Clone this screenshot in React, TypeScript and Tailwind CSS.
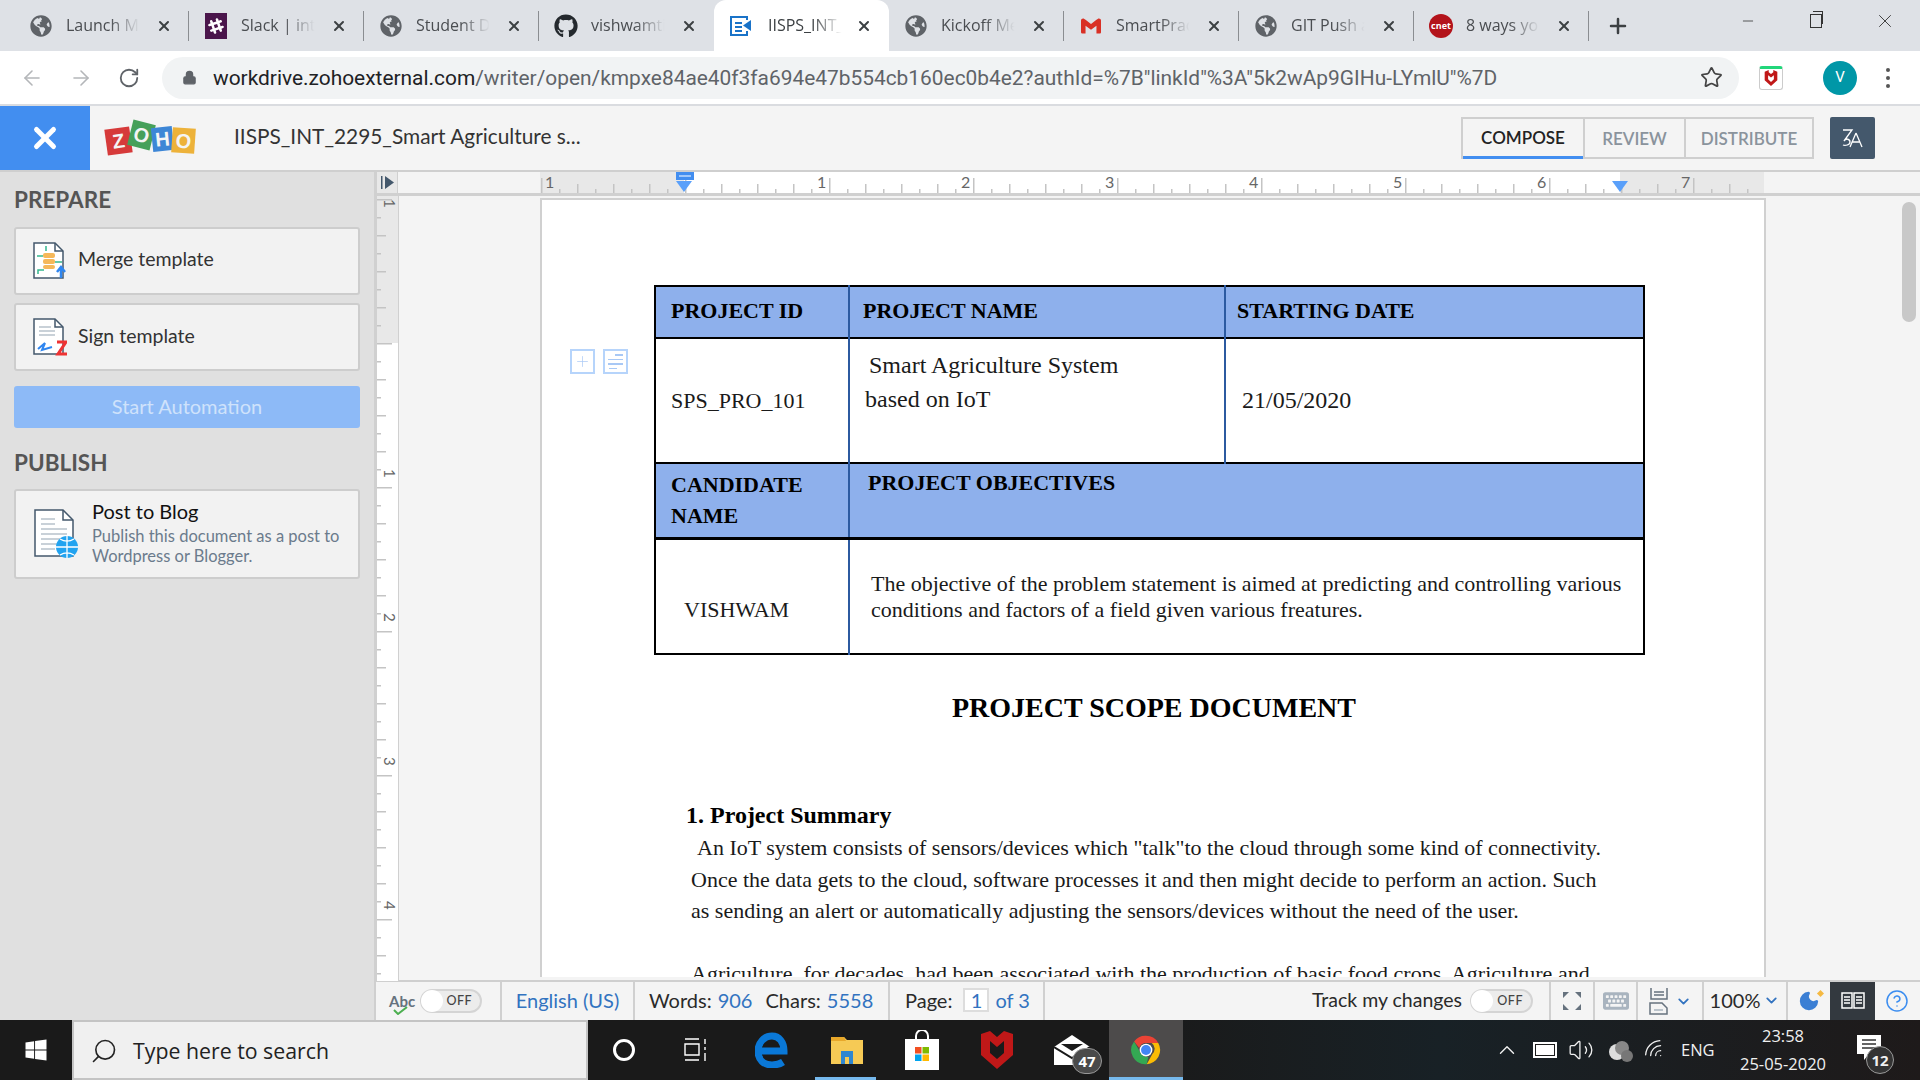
import { ArrowLeft, ArrowRight, RotateCw, Lock, Star, Plus, X, Minus, ChevronDown, ChevronUp, Search, Volume2, Wifi, CircleHelp, Moon } from "lucide-react";
import { FaGithub, FaGlobeAmericas, FaSlackHash, FaWindows, FaKeyboard } from "react-icons/fa";
import { SiGmail } from "react-icons/si";

function Globe() {
  return <FaGlobeAmericas size={22} className="text-[#5f6368]" />;
}

function DocTabIcon() {
  return (
    <svg width="24" height="22" viewBox="0 0 24 22" fill="none" stroke="#1a73c8" strokeWidth="2">
      <path d="M18 5V2H2v18h16v-4" />
      <path d="M6 8h7M6 12h7M6 16h7" />
      <path d="M22 5v11l-8-5.5z" fill="#1a73c8" stroke="none" />
    </svg>
  );
}

const tabs = [
  { title: "Launch Me", icon: <Globe /> },
  { title: "Slack | inte", icon: <span className="w-[22px] h-[26px] bg-[#4a154b] flex items-center justify-center"><FaSlackHash size={18} className="text-white" /></span> },
  { title: "Student D", icon: <Globe /> },
  { title: "vishwamti", icon: <FaGithub size={24} className="text-[#24292e]" /> },
  { title: "IISPS_INT_", icon: <DocTabIcon />, active: true },
  { title: "Kickoff Me", icon: <Globe /> },
  { title: "SmartPrac", icon: <SiGmail size={20} className="text-[#d93025]" /> },
  { title: "GIT Push a", icon: <Globe /> },
  { title: "8 ways yo", icon: <span className="w-[24px] h-[24px] rounded-full bg-[#b3131b] text-white text-[9px] font-bold flex items-center justify-center">cnet</span> },
];

function Tab({ title, icon, active, last }: { title: string; icon: React.ReactNode; active?: boolean; last?: boolean }) {
  return (
    <div
      className={`relative h-full w-[175px] shrink-0 flex items-center pl-[15px] pr-[17px] ${
        active ? "bg-white rounded-t-[12px]" : ""
      }`}
    >
      <div className="w-[24px] flex justify-center shrink-0">{icon}</div>
      <div
        className={`${active ? "ml-[15px] text-[#3c4043]" : "ml-[13px] text-[#4a4d51]"} w-[80px] whitespace-nowrap text-[16px] mb-[2px] [mask-image:linear-gradient(to_right,black_55%,transparent_92%)]`}
      >
        {title}
      </div>
      <X size={16} strokeWidth={3} className="ml-auto text-[#3c4043]" />
      {!active && !last && <div className="absolute right-0 top-[11px] h-[30px] w-[1px] bg-[#8a8d91]" />}
    </div>
  );
}

function ChromeBar() {
  return (
    <div className="h-[51px] bg-[#dee1e6] flex items-end font-['Open_Sans',sans-serif]">
      <div className="w-[14px]" />
      {tabs.map((t, i) => (
        <Tab key={t.title} title={t.title} icon={t.icon} active={t.active} last={i === 3} />
      ))}
      <Plus size={24} strokeWidth={2.5} className="ml-[17px] mb-[13px] text-[#3c4043]" />
      <div className="ml-auto flex items-center h-full text-[#333]">
        <div className="w-[68px] flex justify-center mb-[10px]"><Minus size={16} strokeWidth={1.2} /></div>
        <div className="w-[68px] flex justify-center mb-[10px] relative">
          <span className="w-[12px] h-[14px] border border-[#333] bg-[#dee1e6] block" />
          <span className="absolute top-[-3px] left-[31px] w-[10px] h-[13px] border-t border-r border-[#333] block" />
        </div>
        <div className="w-[70px] flex justify-center mb-[10px]"><X size={22} strokeWidth={1} /></div>
      </div>
    </div>
  );
}

function AddressBar() {
  return (
    <div className="h-[55px] bg-white border-b-2 border-[#dadce0] flex items-center font-['Roboto',sans-serif]">
      <div className="w-[162px] pl-[20px] flex items-center gap-[25px] shrink-0">
        <ArrowLeft size={24} strokeWidth={1.6} className="text-[#b4b6b9]" />
        <ArrowRight size={24} strokeWidth={1.6} className="text-[#b4b6b9]" />
        <RotateCw size={22} strokeWidth={2} className="text-[#5f6368]" />
      </div>
      <div className="w-[1577px] h-[42px] rounded-full bg-[#f1f3f4] flex items-center pl-[20px]">
        <Lock size={15} fill="#5f6368" className="text-[#5f6368]" />
        <div className="ml-[16px] mt-[2px] text-[20.9px] whitespace-nowrap text-[#5f6368]">
          <span className="text-[#202124]">workdrive.zohoexternal.com</span>
          /writer/open/kmpxe84ae40f3fa694e47b554cb160ec0b4e2?authId=%7B"linkId"%3A"5k2wAp9GIHu-LYmlU"%7D
        </div>
        <Star size={23} strokeWidth={1.8} className="ml-auto mr-[16px] text-[#444]" />
      </div>
      <div className="ml-[20px] w-[24px] h-[24px] rounded-[3px] border border-[#ccc] border-t-[3px] border-t-[#22d67a] flex items-center justify-center">
        <McAfee size={14} />
      </div>
      <div className="ml-[40px] w-[34px] h-[34px] rounded-full bg-[#0097a7] text-white text-[15px] flex items-center justify-center">V</div>
      <div className="ml-[29px] flex flex-col gap-[4px]">
        <span className="w-[4px] h-[4px] rounded-full bg-[#555]" />
        <span className="w-[4px] h-[4px] rounded-full bg-[#555]" />
        <span className="w-[4px] h-[4px] rounded-full bg-[#555]" />
      </div>
    </div>
  );
}

function McAfee({ size }: { size: number }) {
  return (
    <svg width={size} height={size * 1.15} viewBox="0 0 24 28">
      <path d="M1 3l7-3v4l4 3 4-3V0l7 3v15l-11 10L1 18z" fill="#c01818" />
      <path d="M7 9l5 4 5-4v7l-5 5-5-5z" fill="#fff" />
    </svg>
  );
}

function ZohoLogo() {
  const letters = [
    { c: "Z", bg: "bg-[#d63a3a]", cls: "-rotate-[8deg] mt-[7px] w-[25px] h-[26px]" },
    { c: "O", bg: "bg-[#46a05a]", cls: "rotate-[14deg] mt-[1px] w-[23px] h-[26px]" },
    { c: "H", bg: "bg-[#3d86d6]", cls: "-rotate-[6deg] mt-[6px] w-[21px] h-[24px]" },
    { c: "O", bg: "bg-[#edb23a]", cls: "rotate-[4deg] mt-[7px] w-[23px] h-[25px]" },
  ];
  return (
    <div className="flex items-start w-[90px] h-[34px] -space-x-[1px]">
      {letters.map((l, i) => (
        <div key={i} className={`${l.bg} ${l.cls} text-[#f4f4f4] font-bold text-[20px] flex items-center justify-center font-['Liberation_Sans',sans-serif]`}>
          {l.c}
        </div>
      ))}
    </div>
  );
}

function AppToolbar() {
  return (
    <div className="h-[66px] bg-[#f4f4f4] border-b-2 border-[#cfcfcf] flex items-center font-['Lato',sans-serif]">
      <div className="w-[90px] h-full bg-[#428ef0] flex items-center justify-center">
        <X size={34} strokeWidth={3.5} className="text-white" />
      </div>
      <div className="ml-[16px]"><ZohoLogo /></div>
      <div className="ml-[38px] mb-[4px] text-[20.85px] text-[#333]">IISPS_INT_2295_Smart Agriculture s...</div>
      <div className="ml-auto flex items-center mr-[45px]">
        <div className="flex h-[42px] border-2 border-b-0 border-[#cfcfcf] text-[17px] font-semibold">
          <div className="w-[120px] pt-[1px] border-b-[3px] border-[#428ef0] flex items-center justify-center text-[#222]">COMPOSE</div>
          <div className="w-[101px] pt-[1px] border-l-2 border-b-2 border-[#cfcfcf] flex items-center justify-center text-[#8a939c]">REVIEW</div>
          <div className="w-[128px] pt-[1px] border-l-2 border-b-2 border-[#cfcfcf] flex items-center justify-center text-[#8a939c]">DISTRIBUTE</div>
        </div>
        <div className="ml-[16px] w-[45px] h-[42px] rounded-[2px] bg-[#44586c] flex items-center justify-center text-white">
          <svg width="24" height="22" viewBox="0 0 24 22" fill="none" stroke="#fff" strokeWidth="1.3">
            <path d="M2 3h9L3 14c2-3 6-2 6 1 0 3-5 4-7 3M15 6l-6 14M15 6l6 14M11 15h8" />
          </svg>
        </div>
      </div>
    </div>
  );
}

function MergeIcon() {
  return (
    <svg width="34" height="38" viewBox="0 0 34 38" fill="none">
      <path d="M1 1h21l8 8v27H1z" fill="#fff" stroke="#44586c" strokeWidth="1.5" />
      <path d="M22 1v8h8" stroke="#44586c" strokeWidth="1.5" />
      <rect x="10" y="11" width="12" height="5" rx="2" fill="#f5b85a" />
      <rect x="10" y="17" width="12" height="5" rx="2" fill="#f5b85a" />
      <rect x="10" y="23" width="12" height="4" rx="2" fill="#f5b85a" />
      <path d="M4 14h6M13 4v5M5 32v-4h6M22 20h7" stroke="#35b88f" strokeWidth="1.5" />
      <path d="M28 36v-9M24 30l4-5 4 5" stroke="#2f86f0" strokeWidth="2.5" />
    </svg>
  );
}

function SignIcon() {
  return (
    <svg width="34" height="38" viewBox="0 0 34 38" fill="none">
      <path d="M1 1h21l8 8v27H1z" fill="#fff" stroke="#44586c" strokeWidth="1.5" />
      <path d="M22 1v8h8" stroke="#44586c" strokeWidth="1.5" />
      <path d="M6 9h12M6 13h16M6 17h16" stroke="#b8c2cc" strokeWidth="1.5" />
      <path d="M5 31l7-6-3 7 10-3" stroke="#2f86f0" strokeWidth="2" />
      <path d="M24 24h9l-8 12h9" stroke="#ee3333" strokeWidth="3" />
    </svg>
  );
}

function BlogIcon() {
  return (
    <svg width="44" height="50" viewBox="0 0 44 50" fill="none">
      <path d="M1 1h28l10 10v36H1z" fill="#fff" stroke="#44586c" strokeWidth="1.5" />
      <path d="M29 1v10h10" stroke="#44586c" strokeWidth="1.5" />
      <path d="M7 10h14M7 15h14M7 20h26M7 25h26M7 30h20M7 35h16M7 40h14" stroke="#b8c2cc" strokeWidth="1.5" />
      <circle cx="33" cy="38" r="11" fill="#22a3f0" />
      <path d="M22 38h22M33 27v22M26 30c5 3 9 3 14 0M26 46c5-3 9-3 14 0" stroke="#fff" strokeWidth="1.3" />
    </svg>
  );
}

function Sidebar() {
  return (
    <aside className="w-[374px] shrink-0 bg-[#e0e0e0] px-[14px] pt-[14px] font-['Lato',sans-serif]">
      <h2 className="text-[22.5px] font-bold text-[#555] leading-[28px]">PREPARE</h2>
      <div className="mt-[13px] h-[68px] w-[346px] bg-[#f2f2f2] border-2 border-[#cdcdcd] rounded-[3px] flex items-center pl-[17px]">
        <MergeIcon />
        <span className="ml-[11px] mb-[5px] text-[19.5px] text-[#333]">Merge template</span>
      </div>
      <div className="mt-[8px] h-[68px] w-[346px] bg-[#f2f2f2] border-2 border-[#cdcdcd] rounded-[3px] flex items-center pl-[17px]">
        <SignIcon />
        <span className="ml-[11px] mb-[3px] text-[19.5px] text-[#333]">Sign template</span>
      </div>
      <div className="mt-[15px] h-[42px] w-[346px] pb-[2px] bg-[#8dbaf7] rounded-[3px] flex items-center justify-center text-[20px] text-[#cfe2fb]">Start Automation</div>
      <h2 className="mt-[21px] text-[22.5px] font-bold text-[#555] leading-[28px]">PUBLISH</h2>
      <div className="mt-[12px] h-[90px] w-[346px] bg-[#f2f2f2] border-2 border-[#cdcdcd] rounded-[3px] flex pl-[18px]">
        <div className="pt-[18px]"><BlogIcon /></div>
        <div className="ml-[14px] pt-[7px]">
          <div className="text-[20px] leading-[26px] text-[#111]">Post to Blog</div>
          <div className="mt-[2px] text-[16.5px] leading-[20px] text-[#6b7b8c]">Publish this document as a post to<br />Wordpress or Blogger.</div>
        </div>
      </div>
    </aside>
  );
}

function HorizontalRuler() {
  const ticks = Array.from({ length: 68 }, (_, i) => i);
  const labels = [1, 2, 3, 4, 5, 6, 7];
  return (
    <svg width="1224" height="21" className="block">
      <rect width="1224" height="21" fill="#e8e8e8" />
      <rect x="144" width="936" height="21" fill="#fff" />
      {ticks.map((n) => {
        const h = n % 8 === 0 ? 15 : n % 2 === 0 ? 9 : 4;
        return <rect key={n} x={1 + n * 18} y={21 - h} width="1.5" height={h} fill="#c4c4c4" />;
      })}
      <text x="5" y="16" fontSize="16" fill="#666" fontFamily="Lato">1</text>
      {labels.map((l) => (
        <text key={l} x={144 * l + 133} y="16" fontSize="16" fill="#666" fontFamily="Lato">{l}</text>
      ))}
    </svg>
  );
}

function VerticalRuler() {
  const ticks = Array.from({ length: 46 }, (_, i) => i);
  const labelY = [3, 273, 417, 561, 705];
  return (
    <svg width="21" height="785" className="block">
      <rect width="21" height="785" fill="#fff" />
      <rect width="21" height="147" fill="#e8e8e8" />
      {ticks.map((n) => {
        const w = n % 8 === 0 ? 15 : n % 2 === 0 ? 9 : 4;
        return <rect key={n} x="0" y={3 + n * 18} width={w} height="1.5" fill="#c4c4c4" />;
      })}
      {labelY.map((y, i) => (
        <text key={y} x="0" y="0" fontSize="15" fill="#666" fontFamily="Lato" transform={`translate(7 ${y}) rotate(90)`}>{i === 0 ? 1 : i}</text>
      ))}
    </svg>
  );
}

function ProjectTable() {
  const div = "border-l-2 border-l-[#2c5aa0]";
  const head = "bg-[#8eb0ec] font-bold text-black";
  return (
    <table className="table-fixed w-[989px] border-2 border-black text-[22px] text-[#1a1a1a] leading-[31px]">
      <colgroup>
        <col className="w-[194px]" />
        <col className="w-[376px]" />
        <col className="w-[419px]" />
      </colgroup>
      <tbody>
        <tr className={`h-[52px] ${head} border-b-2 border-black`}>
          <td className="pl-[15px] pb-[3px]">PROJECT ID</td>
          <td className={`pl-[13px] pb-[3px] ${div}`}>PROJECT NAME</td>
          <td className={`pl-[11px] pb-[3px] ${div}`}>STARTING DATE</td>
        </tr>
        <tr className="h-[125px] border-b-2 border-black">
          <td className="pl-[15px]">SPS_PRO_101</td>
          <td className={`pl-[15px] align-top pt-[10px] text-[24px] leading-[33.5px] ${div}`}>
            <span className="ml-[4px]">Smart Agriculture System</span>
            <br />
            based on IoT
          </td>
          <td className={`pl-[16px] text-[24px] ${div}`}>21/05/2020</td>
        </tr>
        <tr className={`h-[75px] ${head} border-b-[3px] border-black`}>
          <td className="pl-[15px] pb-[1px]">CANDIDATE<br />NAME</td>
          <td colSpan={2} className={`pl-[18px] align-top pt-[3px] ${div}`}>PROJECT OBJECTIVES</td>
        </tr>
        <tr className="h-[116px]">
          <td className="pl-[28px] pt-[26px]">VISHWAM</td>
          <td colSpan={2} className={`pl-[21px] pt-[1px] leading-[26px] ${div}`}>
            The objective of the problem statement is aimed at predicting and controlling various
            <br />
            conditions and factors of a field given various freatures.
          </td>
        </tr>
      </tbody>
    </table>
  );
}

function Page() {
  return (
    <div className="relative ml-[141px] mt-[2px] w-[1226px] h-[779px] bg-white border-x-2 border-t-2 border-[#d0d0d0] overflow-hidden font-['Liberation_Serif',serif]">
      <div className="pt-[85px] pl-[112px]">
        <ProjectTable />
      </div>
      <h1 className="mt-[35px] ml-[410px] text-[28px] font-bold leading-[36px] text-black whitespace-nowrap">PROJECT SCOPE DOCUMENT</h1>
      <h2 className="mt-[73px] ml-[144px] text-[24px] font-bold leading-[32px] text-black">1. Project Summary</h2>
      <div className="ml-[149px] mt-[1px] text-[22px] leading-[31.7px] text-[#1a1a1a] whitespace-nowrap">
        <p className="ml-[6px]">An IoT system consists of sensors/devices which "talk"to the cloud through some kind of connectivity.</p>
        <p>Once the data gets to the cloud, software processes it and then might decide to perform an action. Such</p>
        <p>as sending an alert or automatically adjusting the sensors/devices without the need of the user.</p>
        <p className="mt-[31px]">Agriculture, for decades, had been associated with the production of basic food crops. Agriculture and</p>
      </div>
      <div className="absolute left-[28px] top-[149px] flex gap-[8px]">
        <div className="w-[25px] h-[25px] border-2 border-[#b6d4fb] flex items-center justify-center">
          <Plus size={17} strokeWidth={1} className="text-[#a8c8f5]" />
        </div>
        <div className="w-[25px] h-[25px] border-2 border-[#b6d4fb] flex flex-col items-center justify-center gap-[3px]">
          <span className="w-[8px] h-[1.5px] bg-[#a8c8f5] ml-[6px]" />
          <span className="w-[15px] h-[1.5px] bg-[#a8c8f5]" />
          <span className="w-[15px] h-[1.5px] bg-[#a8c8f5]" />
          <span className="w-[8px] h-[1.5px] bg-[#a8c8f5] mr-[6px]" />
        </div>
      </div>
    </div>
  );
}

function Toggle({ className }: { className?: string }) {
  return (
    <div className={`w-[63px] h-[24px] rounded-full bg-[#ececec] border-2 border-[#d4d4d4] flex items-center justify-between pr-[8px] ${className ?? ""}`}>
      <span className="w-[22px] h-[22px] rounded-full bg-white -ml-[1px]" />
      <span className="text-[12.5px] font-medium tracking-[0.5px] text-[#444]">OFF</span>
    </div>
  );
}

function StatusBar() {
  const sep = "border-l-2 border-[#d0d0d0] h-full flex items-center justify-center";
  return (
    <div className="h-[40px] bg-[#f4f4f4] border-t-2 border-[#cfcfcf] border-l-2 flex items-center text-[20px] font-['Lato',sans-serif] text-[#2a2a2a]">
      <div className="w-[124px] flex items-center pl-[13px] h-full">
        <div className="relative text-[15px] font-bold text-[#66727e] leading-none">
          Abc
          <svg width="16" height="9" viewBox="0 0 16 9" className="absolute left-[4px] top-[12px]" fill="none" stroke="#4caf50" strokeWidth="2"><path d="M1 4l4 4 9-7" /></svg>
        </div>
        <Toggle className="ml-[5px] !w-[62px]" />
      </div>
      <div className={`${sep} w-[133px] pb-[2px] text-[#3273c0]`}>English (US)</div>
      <div className={`${sep} w-[255px] pb-[2px] !justify-start pl-[14px] gap-[6px]`}>
        <span>Words:</span><span className="text-[#3273c0]">906</span>
        <span className="ml-[7px]">Chars:</span><span className="text-[#3273c0]">5558</span>
      </div>
      <div className={`${sep} w-[155px] pb-[2px] !justify-start pl-[15px]`}>
        Page:
        <span className="ml-[11px] w-[26px] h-[24px] border-2 border-[#ddd] bg-white flex items-center justify-center text-[#3273c0]">1</span>
        <span className="ml-[6px] text-[#3273c0]">of 3</span>
      </div>
      <div className="border-l-2 border-[#d0d0d0] h-full w-[506px] pb-[2px] flex items-center justify-end pr-[16px] text-[19.5px]">
        Track my changes
        <Toggle className="ml-[8px] mt-[2px]" />
      </div>
      <div className={`${sep} w-[44px]`}>
        <svg width="18" height="18" viewBox="0 0 18 18" fill="#66727e"><path d="M0 0h6L0 6zM18 0v6l-6-6zM0 18v-6l6 6zM18 18h-6l6-6z" /></svg>
      </div>
      <div className={`${sep} w-[43px]`}><FaKeyboard size={26} className="text-[#a9b4bf]" /></div>
      <div className={`${sep} w-[66px] gap-[6px]`}>
        <svg width="20" height="28" viewBox="0 0 20 28" fill="none" stroke="#66727e" strokeWidth="1.5">
          <path d="M2 1v11h16V1M2 4h0M5 5h10M5 8h10M1 27V16h12l5 5v6z" />
          <path d="M5 23h9" stroke="#a9b4bf" />
        </svg>
        <ChevronDown size={17} strokeWidth={2.5} className="text-[#3273c0]" />
      </div>
      <div className={`${sep} w-[84px] pb-[2px] gap-[3px]`}>
        100%
        <ChevronDown size={17} strokeWidth={2.5} className="text-[#3273c0]" />
      </div>
      <div className={`${sep} w-[44px] relative`}>
        <Moon size={22} fill="#3b7fd4" className="text-[#3b7fd4]" />
        <span className="absolute right-[7px] top-[9px] w-[5px] h-[5px] rotate-45 bg-[#f5b942]" />
      </div>
      <div className="h-full w-[45px] bg-[#33393f] flex items-center justify-center">
        <svg width="24" height="20" viewBox="0 0 24 20" fill="none" stroke="#fff" strokeWidth="1.5">
          <path d="M1 2h10v15H1zM13 2h10v15H13zM3 6h6M3 9h6M3 12h6M15 6h6M15 9h6M15 12h6" />
        </svg>
      </div>
      <div className="h-full w-[44px] flex items-center justify-center">
        <CircleHelp size={24} strokeWidth={1.5} className="text-[#3b8df0]" />
      </div>
    </div>
  );
}

function ChromeLogo() {
  return (
    <svg width="34" height="34" viewBox="0 0 48 48">
      <path d="M24 4a20 20 0 0 1 17.3 10H24a10 10 0 0 0-9.5 7L7.2 12A20 20 0 0 1 24 4z" fill="#ea4335" />
      <path d="M41.3 14A20 20 0 0 1 25 44l8-14.5A10 10 0 0 0 32 14z" fill="#fbbc05" />
      <path d="M7.2 12l8 14a10 10 0 0 0 12 7.5L25 44A20 20 0 0 1 7.2 12z" fill="#34a853" />
      <circle cx="24" cy="24" r="9" fill="#fff" />
      <circle cx="24" cy="24" r="7" fill="#4285f4" />
    </svg>
  );
}

function EdgeLogo() {
  return (
    <svg width="34" height="36" viewBox="0 0 34 36" fill="none" stroke="#0a78d7" strokeWidth="7">
      <path d="M6 19h23c0-9-5-15-12-15C9 4 3 11 3 19c0 9 6 14 14 14 4 0 8-1 11-3" />
    </svg>
  );
}

function Taskbar() {
  return (
    <div className="h-[60px] bg-[linear-gradient(90deg,#1a1a1a_0%,#1a1a1a_60%,#182126_75%,#1e1a1a_100%)] flex items-stretch font-['Open_Sans',sans-serif] text-white">
      <div className="w-[72px] flex items-center justify-center"><FaWindows size={24} /></div>
      <div className="w-[516px] bg-[#f0f0f0] border-2 border-[#c4c4c4] flex items-center pl-[16px] pt-[2px] text-[#222]">
        <Search size={28} strokeWidth={1.4} className="-scale-x-100" />
        <span className="ml-[15px] text-[21.3px]">Type here to search</span>
      </div>
      <div className="w-[71px] flex items-center justify-center">
        <span className="w-[22px] h-[22px] rounded-full border-[3px] border-white" />
      </div>
      <div className="w-[75px] flex items-center justify-center">
        <svg width="26" height="24" viewBox="0 0 26 24" fill="none" stroke="#fff" strokeWidth="1.4">
          <path d="M1 1h14M1 6h14v11H1zM1 22h14M21 1v5M21 9v3M21 15v8" />
        </svg>
      </div>
      <div className="w-[75px] flex items-center justify-center"><EdgeLogo /></div>
      <div className="relative w-[75px] flex items-center justify-center">
        <svg width="34" height="32" viewBox="0 0 34 32">
          <path d="M1 3h13l3 3h16v24H1z" fill="#f6ca55" />
          <path d="M1 3h13l2 4H1z" fill="#e8a82a" />
          <path d="M11 30V17h12v13h-4v-7h-4v7z" fill="#2f86d0" />
        </svg>
        <span className="absolute bottom-0 left-[6px] w-[61px] h-[3px] bg-[#76b9ed]" />
      </div>
      <div className="w-[75px] flex items-center justify-center">
        <svg width="34" height="40" viewBox="0 0 34 40">
          <path d="M11 10V6a6 6 0 0 1 12 0v4" fill="none" stroke="#fff" strokeWidth="2" />
          <rect y="9" width="34" height="31" fill="#fff" />
          <rect x="10" y="17" width="6.5" height="6.5" fill="#f25022" />
          <rect x="17.5" y="17" width="6.5" height="6.5" fill="#7fba00" />
          <rect x="10" y="24.5" width="6.5" height="6.5" fill="#00a4ef" />
          <rect x="17.5" y="24.5" width="6.5" height="6.5" fill="#ffb900" />
        </svg>
      </div>
      <div className="w-[75px] flex items-center justify-center">
        <svg width="32" height="38" viewBox="0 0 32 38">
          <path d="M0 3l9-3 7 6 7-6 9 3v21l-16 14L0 24z" fill="#c01818" />
          <path d="M9 10l7 6 7-6v12l-7 6-7-6z" fill="#1a1a1a" />
        </svg>
      </div>
      <div className="relative w-[75px] flex items-center justify-center">
        <svg width="36" height="30" viewBox="0 0 36 30">
          <path d="M0 12L18 0l18 12v18H0z" fill="#fff" />
          <path d="M0 12l18 11 18-11" fill="none" stroke="#1a1a1a" strokeWidth="2" />
          <path d="M7 9h22l-11 7z" fill="#1a1a1a" />
        </svg>
        <span className="absolute left-[38px] top-[28px] w-[30px] h-[26px] rounded-full bg-[#4a4a4a] border border-[#999] flex items-center justify-center text-[15px] font-bold">47</span>
      </div>
      <div className="relative w-[74px] bg-[#4d4b4b] flex items-center justify-center">
        <ChromeLogo />
        <span className="absolute bottom-0 left-0 w-full h-[3px] bg-[#76b9ed]" />
      </div>
      <div className="flex-1 flex items-center justify-end text-[#f0f0f0]">
        <ChevronUp size={26} strokeWidth={1.3} />
        <span className="ml-[13px] relative w-[24px] h-[16px] border-2 border-white bg-[#1a1a1a] flex items-center">
          <span className="w-[18px] h-[10px] bg-white ml-[1px]" />
        </span>
        <Volume2 size={26} strokeWidth={1.2} className="ml-[11px]" />
        <svg width="26" height="24" viewBox="0 0 26 24" className="ml-[13px]">
          <circle cx="10" cy="14" r="8" fill="#ddd" />
          <circle cx="15" cy="10" r="7" fill="#888" />
          <circle cx="20" cy="18" r="6" fill="#777" />
        </svg>
        <Wifi size={24} strokeWidth={1.3} className="ml-[10px] rotate-[-45deg]" />
        <span className="ml-[14px] text-[16.5px] w-[40px]">ENG</span>
        <div className="ml-[9px] w-[106px] text-center text-[16.5px] leading-[28px] pb-[1px] whitespace-nowrap">
          <div>23:58</div>
          <div>25-05-2020</div>
        </div>
        <div className="relative w-[84px] flex justify-start pl-[21px]">
          <svg width="26" height="26" viewBox="0 0 26 26" className="-translate-y-[2px]">
            <path d="M0 0h24v19H12l-5 6v-6H0z" fill="#fff" />
            <path d="M5 5h14M5 9h14M5 13h14" stroke="#333" strokeWidth="1.5" />
          </svg>
          <span className="absolute left-[30px] top-[9px] w-[28px] h-[28px] rounded-full bg-[#333] border border-[#999] flex items-center justify-center text-[15px] font-bold">12</span>
        </div>
      </div>
    </div>
  );
}

export default function App() {
  return (
    <div className="w-[1920px] h-[1080px] overflow-hidden flex flex-col bg-white">
      <ChromeBar />
      <AddressBar />
      <AppToolbar />
      <div className="flex-1 flex min-h-0">
        <Sidebar />
        <div className="flex-1 flex flex-col min-w-0 bg-[#f4f4f4]">
          <div className="flex-1 relative min-h-0 border-l-[3px] border-[#d0d0d0]">
            <div className="flex h-[24px] border-b-[3px] border-[#d0d0d0]">
              <div className="w-[21px] bg-[#e8e8e8] flex items-center justify-center border-r border-[#d0d0d0]">
                <svg width="13" height="13" viewBox="0 0 13 13" fill="#44586c"><path d="M0 0h1.5v13H0zM4 0l9 6.5L4 13z" /></svg>
              </div>
              <div className="ml-[142px]"><HorizontalRuler /></div>
            </div>
            <div className="flex">
              <div className="w-[22px] border-r border-[#d0d0d0] shrink-0"><VerticalRuler /></div>
              <Page />
            </div>
            <svg width="16" height="11" viewBox="0 0 16 11" fill="#5aa0fa" className="absolute left-[299px] top-[9px]"><path d="M0 0l8 11 8-11z" /></svg>
            <div className="absolute left-[299px] top-0 w-[18px] h-[8px] bg-[#428ef0] flex items-center justify-center"><span className="w-[12px] h-[2px] bg-[#a0c8fb]" /></div>
            <svg width="16" height="11" viewBox="0 0 16 11" fill="#5aa0fa" className="absolute left-[1235px] top-[9px]"><path d="M0 0l8 11 8-11z" /></svg>
            <div className="absolute left-[1525px] top-[30px] w-[14px] h-[120px] rounded-full bg-[#c8c8c8]" />
          </div>
          <StatusBar />
        </div>
      </div>
      <Taskbar />
    </div>
  );
}
